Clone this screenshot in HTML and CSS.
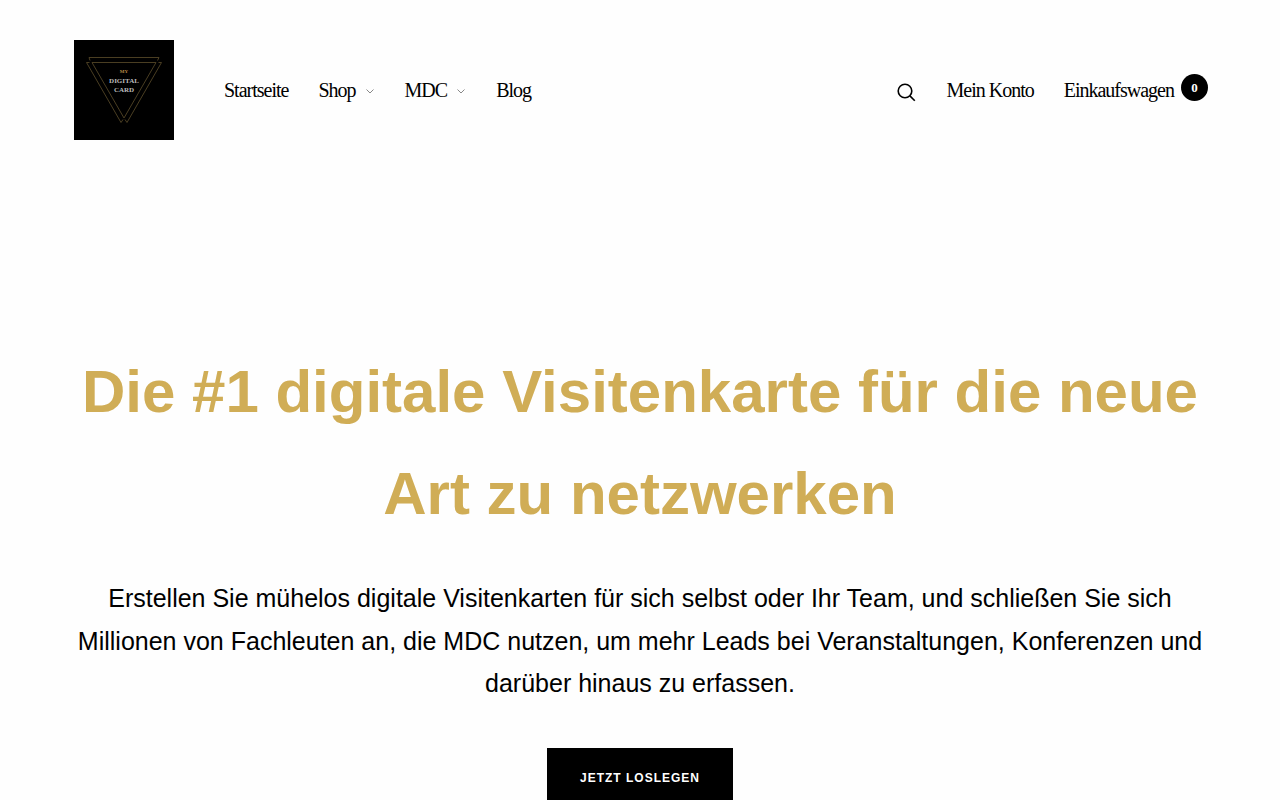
FILE: index.html
```
<!DOCTYPE html>
<html lang="de">
<head>
    <meta charset="UTF-8">
    <meta name="viewport" content="width=device-width, initial-scale=1.0">
    <title>My Digital Card</title>
    <link rel="stylesheet" href="styles.css">
</head>
<body>
    <header class="header">
        <a class="logo" href="#" aria-label="My Digital Card">
            <svg width="100" height="100" viewBox="0 0 100 100">
                <rect width="100" height="100" fill="#000"/>
                <g fill="none" stroke="#4a3e22" stroke-width="1">
                    <path d="M16 20.500L15 17.500H85L83.500 20.500"/>
                    <path d="M18 22.500H82L50 78Z"/>
                    <path d="M15.500 22.500H12.500L47 82.500L49 79.500"/>
                    <path d="M84.500 22.500H87.500L53 82.500L51 79.500"/>
                </g>
                <g font-family="Liberation Serif, serif" font-weight="bold" text-anchor="middle">
                    <text x="50" y="33" font-size="5" fill="#b58a45">MY</text>
                    <text x="50" y="43" font-size="7" fill="#bbb">DIGITAL</text>
                    <text x="50" y="52" font-size="7" fill="#bbb">CARD</text>
                </g>
            </svg>
        </a>
        <nav class="nav">
            <a href="#">Startseite</a>
            <a href="#">Shop
                <svg class="chevron" width="10" height="6" viewBox="0 0 10 6"><path d="M1.500 1.500l3.500 3.500 3.500-3.500" fill="none" stroke="#888"/></svg>
            </a>
            <a href="#">MDC
                <svg class="chevron" width="10" height="6" viewBox="0 0 10 6"><path d="M1.500 1.500l3.500 3.500 3.500-3.500" fill="none" stroke="#888"/></svg>
            </a>
            <a href="#">Blog</a>
        </nav>
        <div class="nav nav-right">
            <button class="search" type="button" aria-label="Suche">
                <svg width="19" height="19" viewBox="0 0 19 19" fill="none" stroke="#000" stroke-width="1.600"><circle cx="8" cy="8" r="6.800"/><path d="M12.900 12.900L17.800 17.800"/></svg>
            </button>
            <a href="#">Mein Konto</a>
            <a class="cart" href="#">Einkaufswagen <span class="cart-count">0</span></a>
        </div>
    </header>

    <main class="hero">
        <h1>Die #1 digitale Visitenkarte für die neue Art zu netzwerken</h1>
        <p>Erstellen Sie mühelos digitale Visitenkarten für sich selbst oder Ihr Team, und schließen Sie sich Millionen von Fachleuten an, die MDC nutzen, um mehr Leads bei Veranstaltungen, Konferenzen und darüber hinaus zu erfassen.</p>
        <a class="button" href="#">Jetzt loslegen</a>
    </main>
</body>
</html>
```
FILE: styles.css
```
body {
    margin: 0;
    background: #fefefe;
    color: #000;
    font-family: "Liberation Sans", Arial, sans-serif;
}

a {
    color: inherit;
    text-decoration: none;
}

.header {
    display: flex;
    align-items: center;
    padding: 40px 72px 40px 74px;
}

.logo svg {
    display: block;
}

.nav {
    display: flex;
    align-items: center;
    gap: 30px;
    margin-left: 50px;
    font-family: "Liberation Serif", "Times New Roman", serif;
    font-size: 20px;
    line-height: 28px;
    letter-spacing: -1px;
}

.nav a {
    display: flex;
    align-items: center;
}

.chevron {
    margin: 2px 0 0 9px;
}

.nav-right {
    margin-left: auto;
}

.search {
    display: flex;
    padding: 4px 0 0;
    border: 0;
    background: none;
}

.cart-count {
    width: 27px;
    margin: 0 0 5px 7px;
    border-radius: 50%;
    background: #000;
    color: #fff;
    font-size: 13px;
    font-weight: bold;
    line-height: 27px;
    letter-spacing: 0;
    text-align: center;
}

.hero {
    padding: 161px 74px 100px;
    text-align: center;
}

.hero h1 {
    margin: 0 0 32px;
    color: #d0ad56;
    font-size: 60px;
    line-height: 1.7;
}

.hero p {
    margin: 0 0 43px;
    font-size: 25px;
    line-height: 1.7;
}

.button {
    display: inline-block;
    padding: 20px 33px;
    background: #000;
    color: #fff;
    font-size: 12px;
    font-weight: bold;
    line-height: 20px;
    letter-spacing: 1px;
    text-transform: uppercase;
}
```
